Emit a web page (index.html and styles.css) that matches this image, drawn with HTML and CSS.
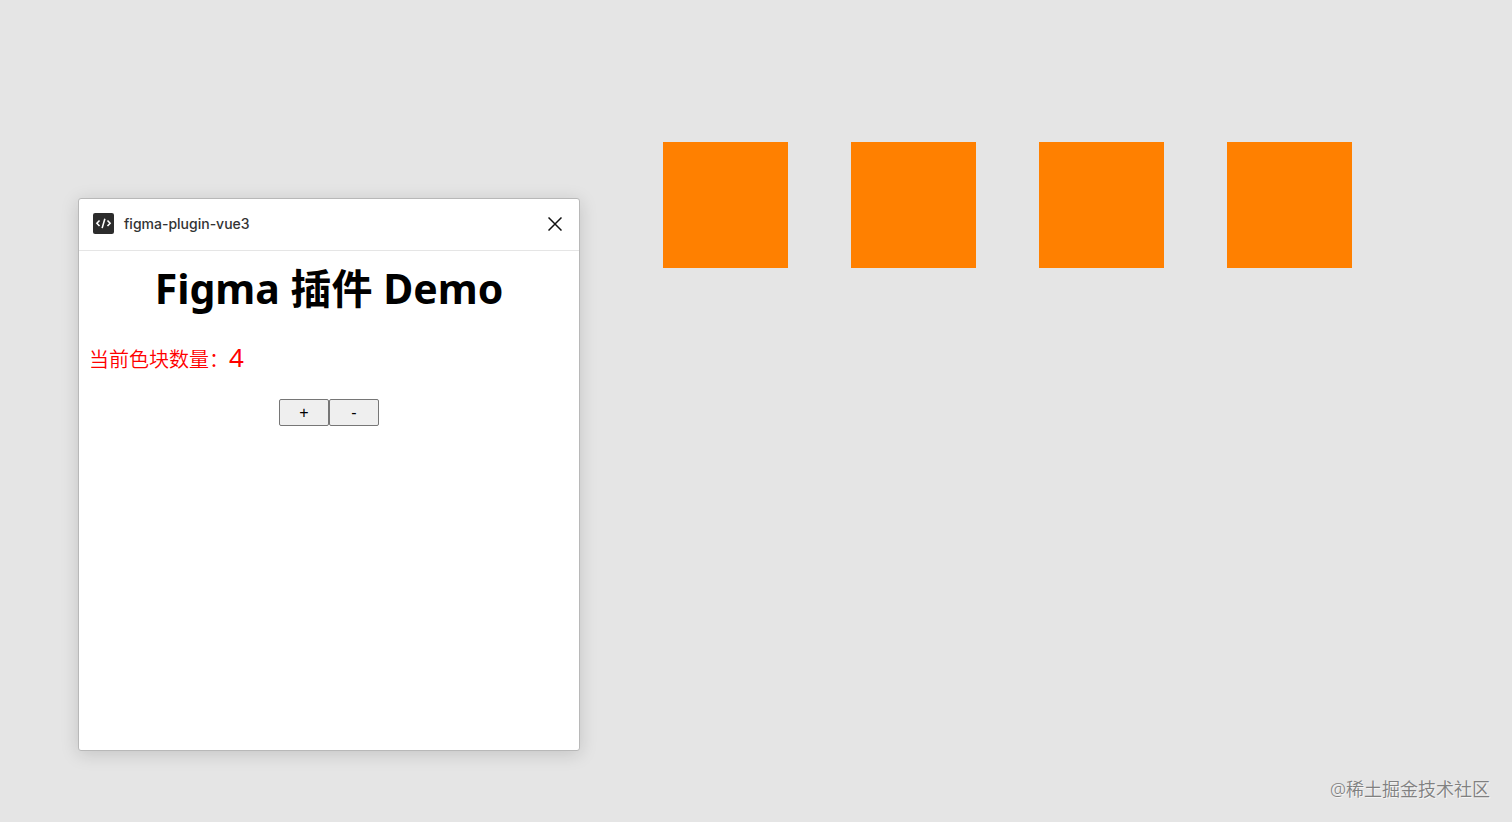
FILE: index.html
```html
<!DOCTYPE html>
<html lang="zh-CN">
<head>
<meta charset="utf-8">
<title>figma-plugin-vue3</title>
<link rel="stylesheet" href="styles.css">
</head>
<body>
<main class="canvas">
  <div class="blocks">
    <div class="block"></div>
    <div class="block"></div>
    <div class="block"></div>
    <div class="block"></div>
  </div>
  <section class="plugin">
    <header class="plugin-header">
      <svg class="plugin-icon" viewBox="0 0 20 20" aria-hidden="true">
        <rect width="20" height="20" rx="2" fill="#2c2c2c"/>
        <path d="M6.2 7.2 3.7 9.8l2.5 2.6M13.8 7.2l2.5 2.6-2.5 2.6M11.3 5.4 8.7 14.4" fill="none" stroke="#fff" stroke-width="1.5"/>
      </svg>
      <span class="plugin-name">figma-plugin-vue3</span>
      <button class="close" type="button" aria-label="关闭">
        <svg class="close-icon" viewBox="0 0 14 14" aria-hidden="true">
          <path d="M.5.5l13 13M13.5.5l-13 13" fill="none" stroke="#111" stroke-width="1.5"/>
        </svg>
      </button>
    </header>
    <div class="plugin-body">
      <h1 class="title">Figma 插件 Demo</h1>
      <p class="count">当前色块数量：<span class="count-value">4</span></p>
      <div class="actions">
        <button class="step" type="button">+</button>
        <button class="step" type="button">-</button>
      </div>
    </div>
  </section>
  <div class="watermark">@稀土掘金技术社区</div>
</main>
</body>
</html>
```
FILE: styles.css
```css
* {
  box-sizing: border-box;
}

body {
  margin: 0;
  font-family: "Noto Sans", "Noto Sans CJK SC", sans-serif;
}

.canvas {
  position: relative;
  min-height: 100vh;
  overflow: hidden;
  background: #e5e5e5;
}

.blocks {
  position: absolute;
  top: 142px;
  left: 663px;
  display: flex;
  gap: 63px;
}

.block {
  width: 125px;
  height: 126px;
  background: #ff8000;
}

.plugin {
  position: absolute;
  top: 198px;
  left: 78px;
  width: 502px;
  height: 553px;
  border: 1px solid #b8b8b8;
  border-radius: 3px;
  background: #fff;
  box-shadow: 0 3px 18px rgba(0, 0, 0, 0.15);
}

.plugin-header {
  display: flex;
  align-items: center;
  gap: 10px;
  height: 52px;
  padding: 0 9px 2px 14px;
  border-bottom: 1px solid #e5e5e5;
}

.plugin-icon {
  width: 21px;
  height: 21px;
}

.plugin-name {
  color: #333;
  font: 500 14px/20px Inter, sans-serif;
}

.close {
  display: flex;
  align-items: center;
  justify-content: center;
  width: 30px;
  height: 30px;
  margin-left: auto;
  padding: 0;
  border: 0;
  background: none;
}

.close-icon {
  width: 14px;
  height: 14px;
}

.plugin-body {
  padding: 9px 10px;
}

.title {
  margin: 0;
  color: #000;
  font-size: 41px;
  line-height: 56px;
  font-weight: 700;
  text-align: center;
}

.count {
  margin: 24px 0 22px;
  color: #f00;
  font-size: 20px;
  line-height: 34px;
  font-weight: 350;
}

.count-value {
  font-size: 26px;
  font-weight: 400;
}

.actions {
  display: flex;
  justify-content: center;
}

.step {
  width: 50px;
  height: 27px;
  padding: 0;
  border: 1px solid #767676;
  border-radius: 2px;
  background: #efefef;
  color: #000;
  font: 16px/20px "Liberation Sans", sans-serif;
}

.watermark {
  position: absolute;
  right: 22px;
  bottom: 19px;
  color: #808080;
  font-size: 18px;
  line-height: 28px;
  font-weight: 350;
  text-shadow: 1px 1px 0 #f5f5f5;
}
```
